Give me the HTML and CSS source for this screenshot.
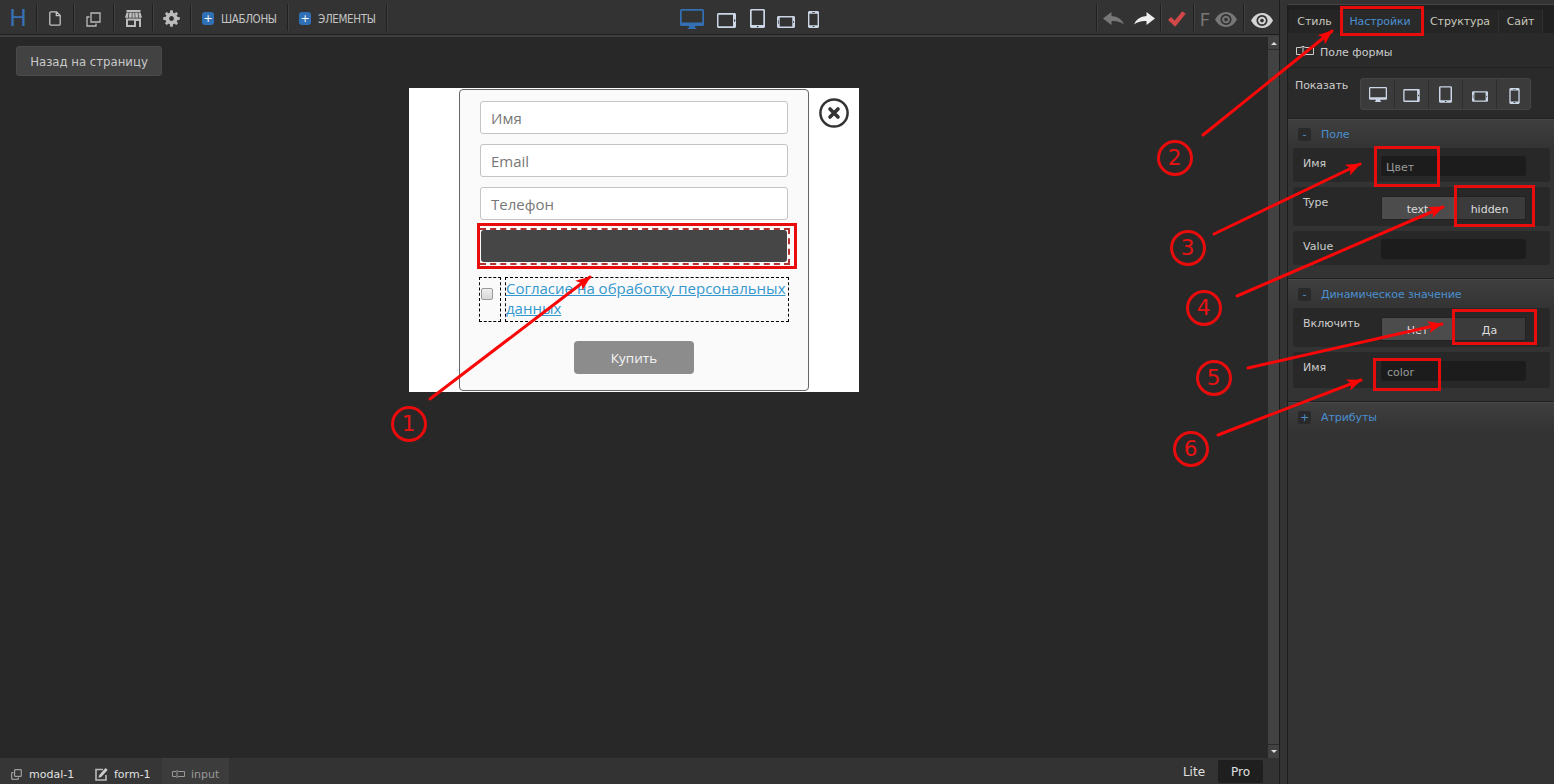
FILE: index.html
```
<!DOCTYPE html>
<html lang="ru">
<head>
<meta charset="utf-8">
<title>Редактор</title>
<link rel="stylesheet" href="styles.css">
</head>
<body>
<svg class="defs" width="0" height="0">
  <symbol id="desktop" viewBox="0 0 24 20"><path fill="currentColor" fill-rule="evenodd" d="M1.500 0h21Q24 0 24 1.500v14Q24 17 22.500 17H15v1.500l1.500 1v.5H7.500v-.5l1.500-1V17H1.500Q0 17 0 15.500v-14Q0 0 1.500 0ZM1.700 1.700v11.800h20.600V1.700Z"/></symbol>
  <symbol id="tablet-l" viewBox="0 0 19 15"><path fill="currentColor" fill-rule="evenodd" d="M1 0h17l1 1v13l-1 1H1l-1-1V1ZM1.500 1.700v11.600H16V1.700ZM17 6.500v2h1.300v-2Z"/></symbol>
  <symbol id="tablet-p" viewBox="0 0 15 19"><path fill="currentColor" fill-rule="evenodd" d="M1 0h13l1 1v17l-1 1H1l-1-1V1ZM1.700 1.500V16h11.600V1.500ZM6.800 17v1.200h1.600V17Z"/></symbol>
  <symbol id="phone-l" viewBox="0 0 18 12"><path fill="currentColor" fill-rule="evenodd" d="M1 0h16l1 1v10l-1 1H1l-1-1V1ZM2.700 1.500v9h12.600v-9ZM16 5.200v1.600h1V5.200ZM1 4v4h.600V4Z"/></symbol>
  <symbol id="phone-p" viewBox="0 0 11 17"><path fill="currentColor" fill-rule="evenodd" d="M1 0h9l1 1v15l-1 1H1l-1-1V1ZM1.400 2.700v11.600h8.200V2.700ZM4.700 15v1h1.600v-1ZM4 1v.7h3V1Z"/></symbol>
  <symbol id="copies" viewBox="0 0 15 15"><path fill="none" stroke="currentColor" stroke-width="1.300" d="M5 1h9v9H5ZM3.500 5H1v9h9v-2.500"/></symbol>
  <symbol id="field" viewBox="0 0 18 10"><path fill="none" stroke="currentColor" d="M5.500 1.500H.5v7h5M8.500 1.500h9v7h-9M7 .5v9M5.500.5h3M5.500 9.500h3"/></symbol>
  <symbol id="eye" viewBox="0 0 22 15"><path fill="currentColor" fill-rule="evenodd" d="M0 7.500Q4 0 11 0t11 7.500Q18 15 11 15T0 7.500ZM11 2a5.500 5.500 0 1 0 .01 0ZM11 3.700a3.800 3.800 0 1 1-.01 0ZM11 5.700a1.800 1.800 0 1 0 .01 0Z"/></symbol>
  <symbol id="arrow" viewBox="0 0 21 14"><path fill="currentColor" d="M12.500 0 21 6.500 12.500 13V9Q5 8.500 0 12.500 3 4.500 12.500 4Z"/></symbol>
</svg>

<div class="app">
  <main class="editor">
    <header class="topbar">
      <div class="cell c-logo">H</div>
      <div class="cell c-file"><svg width="12" height="15" viewBox="0 0 12 15"><path fill="none" stroke="#c4c4c4" stroke-width="1.300" d="M.8 2Q.8.8 2 .8h5.500L11.200 4.500V13q0 1.200-1.200 1.200H2Q.8 14.200.8 13ZM7.300 1v3.700h3.900"/></svg></div>
      <div class="cell c-copy"><svg width="15" height="15"><use href="#copies"/></svg></div>
      <div class="cell c-shop"><svg width="17" height="17" viewBox="0 0 17 17"><path fill="#bcbcbc" fill-rule="evenodd" d="M1.500 0h14v2h-14ZM1.500 2.600h2.200L3 7.800H0ZM4.400 2.600h2.500l-.2 5.200H3.700ZM7.500 2.600h2l.3 5.200h-2.500ZM10.100 2.600h2.500l.7 5.200h-2.900ZM13.300 2.600h2.200L17 7.800h-3ZM1 8.500h15V17h-2v-6h-3v6H1ZM3 10.500v4.500h6v-4.500Z"/></svg></div>
      <div class="cell c-gear"><svg width="17" height="17" viewBox="-8.500 -8.500 17 17"><g fill="#bcbcbc"><circle r="4.200" fill="none" stroke="#bcbcbc" stroke-width="3.600"/><path d="M-1.700-5.500-1.200-8.300H1.200L1.700-5.500ZM-1.700 5.500-1.200 8.300H1.200L1.700 5.500ZM-5.500-1.700-8.300-1.200V1.200L-5.500 1.700ZM5.500-1.700 8.300-1.200V1.200L5.500 1.700Z"/><path transform="rotate(45)" d="M-1.700-5.500-1.200-8H1.200L1.700-5.500ZM-1.700 5.500-1.200 8H1.200L1.700 5.500ZM-5.500-1.700-8-1.200V1.200L-5.500 1.700ZM5.500-1.700 8-1.200V1.200L5.500 1.700Z"/></g></svg></div>
      <div class="cell c-tpl"><span class="plus">+</span><span class="caps">ШАБЛОНЫ</span></div>
      <div class="cell c-elm"><span class="plus">+</span><span class="caps">ЭЛЕМЕНТЫ</span></div>
      <div class="devices">
        <svg class="active" width="24" height="20"><use href="#desktop"/></svg>
        <svg width="19" height="15"><use href="#tablet-l"/></svg>
        <svg width="15" height="19"><use href="#tablet-p"/></svg>
        <svg width="18" height="12"><use href="#phone-l"/></svg>
        <svg width="11" height="17"><use href="#phone-p"/></svg>
      </div>
      <div class="cell c-gap"></div>
      <div class="cell c-undo"><svg class="undo" width="21" height="14"><use href="#arrow"/></svg><svg class="redo" width="21" height="14"><use href="#arrow"/></svg></div>
      <div class="cell c-check"><svg width="18" height="16" viewBox="0 0 18 16"><path fill="none" stroke="#d04848" stroke-width="4.300" d="M1.500 7.500 7 12.700 16 1.500"/></svg></div>
      <div class="cell c-feye"><span>F</span><svg width="22" height="15"><use href="#eye"/></svg></div>
      <div class="c-eye"><svg width="22" height="15"><use href="#eye"/></svg></div>
    </header>

    <div class="workspace">
      <div class="stage">
        <a class="back">Назад на страницу</a>
        <div class="modal">
          <form class="form">
            <div class="input">Имя</div>
            <div class="input">Email</div>
            <div class="input">Телефон</div>
            <div class="hidden-box"><div class="hidden-input"></div></div>
            <div class="consent">
              <div class="check"><i></i></div>
              <div class="link"><a>Согласие на обработку персональных данных</a></div>
            </div>
            <div class="buy">Купить</div>
          </form>
          <svg class="close" width="30" height="30" viewBox="0 0 30 30"><circle cx="15" cy="15" r="13.600" fill="#fff" stroke="#333" stroke-width="2.500"/><path stroke="#333" stroke-width="3.600" stroke-linecap="round" d="M11 11l8 8M19 11l-8 8"/></svg>
        </div>
      </div>
      <div class="scroll"><b><i class="up"></i></b><b><i class="down"></i></b></div>
    </div>

    <footer class="bottombar">
      <div class="crumb c1"><svg width="11" height="11"><use href="#copies"/></svg>modal-1</div>
      <div class="crumb c2"><svg width="13" height="13" viewBox="0 0 13 13"><path fill="none" stroke="#bbb" stroke-width="1.600" d="M8 1.500H1v10.500h10V7"/><path fill="#ccc" d="M3.500 9.800 4.300 7 10.500 0 12.700 2 6.200 9Z"/></svg>form-1</div>
      <div class="crumb c3"><svg width="13" height="8" viewBox="0 0 13 8"><path fill="none" stroke="currentColor" d="M4 1.500H.5v5H4M6 1.500h6.500v5H6M5 0v8"/></svg>input</div>
      <div class="modes"><span>Lite</span><span class="on">Pro</span></div>
    </footer>
  </main>

  <aside class="panel">
    <nav class="tabs"><span class="t1">Стиль</span><span class="t2">Настройки</span><span class="t3">Структура</span><span class="t4">Сайт</span></nav>
    <div class="element"><svg width="18" height="10"><use href="#field"/></svg>Поле формы</div>
    <div class="show">
      <span>Показать</span>
      <div class="group">
        <i><svg width="18" height="15"><use href="#desktop"/></svg></i>
        <i><svg width="17" height="13"><use href="#tablet-l"/></svg></i>
        <i><svg width="13" height="17"><use href="#tablet-p"/></svg></i>
        <i><svg width="16" height="11"><use href="#phone-l"/></svg></i>
        <i><svg width="11" height="16"><use href="#phone-p"/></svg></i>
      </div>
    </div>
    <section class="block s1">
      <h3><b>-</b>Поле</h3>
      <div class="row r34"><label>Имя</label><div class="value">Цвет</div></div>
      <div class="row r39"><label>Type</label><div class="toggle"><span class="on">text</span><span>hidden</span></div></div>
      <div class="row r34"><label>Value</label><div class="value"></div></div>
    </section>
    <section class="block s2">
      <h3><b>-</b>Динамическое значение</h3>
      <div class="row r39"><label>Включить</label><div class="toggle"><span class="on">Нет</span><span>Да</span></div></div>
      <div class="row r36"><label>Имя</label><div class="value">color</div></div>
    </section>
    <section class="block s3"><h3><b>+</b>Атрибуты</h3></section>
  </aside>
</div>

<svg class="notes" width="1554" height="784" viewBox="0 0 1554 784">
  <defs><marker id="tip" markerUnits="userSpaceOnUse" markerWidth="16" markerHeight="12" refX="14" refY="6" orient="auto"><path fill="#fb0505" d="M0 0 15 6 0 12 3.500 6Z"/></marker></defs>
  <g class="frames">
    <rect x="478.500" y="224.500" width="317" height="43"/>
    <rect x="1341.500" y="7.500" width="81" height="27"/>
    <rect x="1375.500" y="147.500" width="63" height="38"/>
    <rect x="1455.500" y="186.500" width="78" height="39"/>
    <rect x="1453.500" y="310.500" width="82" height="33"/>
    <rect x="1374.500" y="359.500" width="65" height="30"/>
  </g>
  <g class="arrows">
    <path d="M430 399 590 277"/><path d="M1203 135 1332 31"/><path d="M1214 234 1360 164"/>
    <path d="M1237 296 1443 207"/><path d="M1248 368 1442 324"/><path d="M1218 435 1361 380"/>
  </g>
  <g class="rings">
    <circle cx="409" cy="424" r="16.500"/><circle cx="1175" cy="158" r="16.500"/><circle cx="1188" cy="248" r="16.500"/>
    <circle cx="1204" cy="308" r="16.500"/><circle cx="1214" cy="378" r="16.500"/><circle cx="1191" cy="449" r="16.500"/>
  </g>
  <g class="nums">
    <text x="408.500" y="431">1</text><text x="1174.500" y="165">2</text><text x="1187.500" y="255">3</text>
    <text x="1203.500" y="315">4</text><text x="1213.500" y="385">5</text><text x="1190.500" y="456">6</text>
  </g>
</svg>
</body>
</html>
```

FILE: styles.css
```
* { box-sizing: border-box; }
body { margin: 0; background: #333; font-family: "DejaVu Sans", sans-serif; font-size: 11px; color: #ccc; overflow: hidden; }
svg { display: block; flex: none; }
.defs { position: absolute; }
i, b { font-style: normal; font-weight: normal; }
.app { display: flex; width: 1554px; height: 784px; }

.editor { width: 1280px; display: flex; flex-direction: column; border-right: 1px solid #1c1c1c; }
.topbar { height: 37px; flex: none; display: flex; align-items: flex-start; padding-top: 4px; background: linear-gradient(#333 34px, #1e1e1e 34px, #1e1e1e 35px, #404040 35px); }
.cell { height: 27px; border-right: 1px solid #202020; box-shadow: 1px 0 #404040; display: flex; align-items: center; justify-content: center; flex: none; }
.c-logo { width: 37px; font: 24px/26px Roboto, sans-serif; color: #3771b5; }
.c-file { width: 37px; padding-top: 2px; }
.c-copy { width: 40px; padding-top: 3px; color: #bbb; }
.c-shop { width: 39px; padding-top: 2px; }
.c-gear { width: 38px; padding-top: 2px; }
.c-tpl { width: 97px; }
.c-elm { width: 99px; }
.c-tpl, .c-elm { justify-content: flex-start; padding: 2px 0 0 11px; gap: 7px; }
.plus { width: 12px; height: 13px; border-radius: 3px; background: #3070b4; color: #fff; font-size: 11px; line-height: 13px; text-align: center; }
.caps { font-family: "DejaVu Sans Condensed", "DejaVu Sans", sans-serif; font-size: 11.500px; letter-spacing: -.35px; color: #c4c4c4; white-space: nowrap; }
.devices { display: flex; align-items: flex-end; height: 24px; margin-left: 293px; color: #cbd6e6; width: 140px; flex: none; }
.devices .active { color: #3270b3; margin: 0 13px -1px 0; }
.devices svg:nth-child(2) { margin-right: 14px; }
.devices svg:nth-child(3) { margin-right: 12px; }
.devices svg:nth-child(4) { margin-right: 13px; }
.c-gap { flex: 1; }
.c-undo { width: 64px; gap: 10px; padding-top: 3px; }
.undo { color: #777; transform: scaleX(-1); }
.redo { color: #eee; }
.c-check { width: 33px; padding-top: 2px; }
.c-feye { width: 50px; gap: 5px; padding-top: 4px; color: #777; font: 18px/22px Roboto, sans-serif; }
.c-eye { width: 35px; color: #d4d4d4; padding: 9px 0 0 7px; }

.workspace { height: 721px; display: flex; background: #282828; }
.stage { flex: 1; padding: 9px 0 0 16px; }
.back { display: block; width: 146px; height: 30px; background: #424242; border: 1px solid #4a4a4a; border-radius: 3px; font: 13px/29px "DejaVu Sans Condensed", "DejaVu Sans", sans-serif; text-align: center; color: #c8c8c8; }
.modal { width: 450px; height: 304px; margin: 12px 0 0 393px; background: #fff; padding: 1px 10px 1px 50px; display: flex; justify-content: space-between; align-items: flex-start; }
.form { width: 350px; height: 302px; border: 1px solid #666; border-radius: 4px; background: #fafafa; padding: 11px 19px 0; font-family: "Open Sans", "Noto Sans", sans-serif; display: flex; flex-direction: column; }
.input { height: 33px; margin: 0 1px 10px; padding-left: 10px; background: #fff; border: 1px solid #c4c4c4; border-radius: 3px; font-size: 15px; line-height: 32px; color: #777; }
.hidden-box { height: 37px; width: 310px; margin: -2px 0 12px 1px; border: 2px dashed #b53030; border-left: 0; }
.hidden-input { height: 32px; width: 306px; margin-left: 1px; border-radius: 3px; background: #464646; }
.consent { display: flex; gap: 4px; height: 45px; }
.check { width: 22px; border: 1px dashed #000; padding: 10px 0 0 1px; }
.check i { display: block; width: 12px; height: 12px; border: 1px solid #999; border-radius: 2px; background: linear-gradient(#eee, #d8d8d8); }
.link { flex: none; width: 284px; border: 1px dashed #000; padding: 0; }
.link a { display: block; font-size: 15px; line-height: 20px; color: #3498d0; text-decoration: underline; }
.buy { width: 120px; height: 33px; margin: 19px auto 0 95px; background: #8c8c8c; border-radius: 4px; color: #f4f4f4; font-size: 13.500px; line-height: 34px; text-align: center; }
.close { margin-top: 9px; }
.scroll { width: 11px; background: #424242; display: flex; flex-direction: column; justify-content: space-between; }
.scroll b { height: 13px; border-bottom: 1px solid #2a2a2a; display: flex; align-items: center; justify-content: center; }
.scroll b:last-child { height: 14px; border-top: 1px solid #2a2a2a; border-bottom: 0; }
.up { border: 3px solid transparent; border-bottom-color: #ddd; border-top: 0; }
.down { border: 3px solid transparent; border-top-color: #ddd; border-bottom: 0; }

.bottombar { height: 26px; display: flex; background: #333; padding-top: 0; }
.crumb { display: flex; align-items: center; padding-top: 6px; background: #363636; color: #e0e0e0; font-size: 11px; }
.crumb svg { color: #bbb; }
.c1 { width: 86px; padding-left: 11px; gap: 7px; }
.c2 { width: 76px; padding-left: 9px; gap: 6px; }
.c3 { width: 67px; padding-left: 10px; gap: 6px; background: #3c3c3c; color: #999; }
.c3 svg { color: #999; }
.modes { margin-left: auto; display: flex; padding: 2px 16px 1px 0; font-size: 12px; line-height: 25px; color: #e0e0e0; }
.modes span { width: 48px; text-align: center; }
.modes .on { width: 45px; background: #1f1f1f; border-radius: 2px; }

.panel { width: 267px; margin: 4px 0 0 7px; border-left: 1px solid #1c1c1c; border-top: 1px solid #444; background: #333; }
.tabs { height: 28px; padding: 5px 0 0 1px; background: #202020; display: flex; line-height: 23px; }
.tabs span { text-align: center; background: #252525; border-right: 1px solid #303030; white-space: nowrap; color: #c8c8bc; letter-spacing: -.1px; }
.t1 { width: 52px; }
.t2 { width: 82px; padding-right: 3px; }
.t3 { width: 76px; padding-right: 1px; }
.t4 { width: 44px; }
.tabs .t2 { background: #2a2a2a; color: #4a90d0; }
.element { height: 35px; background: #2a2a2a; display: flex; align-items: center; gap: 6px; padding: 4px 0 0 8px; box-shadow: inset 0 -1px #222; color: #ccc; }
.element svg { margin-top: -3px; }
.show { height: 50px; background: #2a2a2a; display: flex; padding: 10px 0 0 7px; }
.show > span { width: 65px; line-height: 15px; letter-spacing: -.1px; }
.group { display: flex; height: 32px; width: 171px; background: #3b3b3b; border: 1px solid #454545; border-radius: 3px; color: #cbd6e6; }
.group i { width: 34px; flex: none; border-right: 1px solid #2e2e2e; display: flex; align-items: flex-end; justify-content: center; padding-bottom: 7px; }
.group i:nth-child(3) { padding-bottom: 6px; }
.group i:last-child { border: 0; padding-bottom: 5px; }
.block { border-top: 1px solid #202020; padding: 0 4px 0 5px; background: linear-gradient(#484848 0 1px, #3f3f3f 1px, #333 30px); display: flex; flex-direction: column; gap: 5px; }
.s1 { height: 160px; }
.s2 { height: 123px; }
.s3 { height: 40px; }
.block h3 { margin: 0 0 -5px; height: 29px; font-size: 11px; font-weight: normal; letter-spacing: -.08px; color: #4a90d0; display: flex; align-items: center; gap: 10px; padding: 1px 0 0 5px; }
.block h3 b { width: 13px; height: 13px; background: #292929; border-radius: 2px; text-align: center; line-height: 13px; }
.row { display: flex; flex: none; background: #282828; border-radius: 3px; padding: 8px 0 0 10px; }
.r34 { height: 34px; }
.r39 { height: 39px; }
.r36 { height: 36px; }
.row label { width: 78px; line-height: 15px; }
.value { width: 145px; height: 20px; background: #1c1c1c; border-radius: 3px; padding-left: 5px; line-height: 23px; color: #999; }
.r36 .value { margin-top: 1px; padding-left: 6px; }
.toggle { display: flex; height: 24px; width: 145px; border: 1px solid #222; margin-top: 1px; line-height: 26px; color: #ddd; }
.toggle span { flex: 1; background: #3b3b3b; text-align: center; }
.toggle .on { background: #4c4c4c; border-right: 1px solid #555; }

.notes { position: absolute; left: 0; top: 0; pointer-events: none; }
.frames rect, .rings circle { fill: none; stroke: #e80c0c; stroke-width: 3; }
.arrows path { fill: none; stroke: #f80808; stroke-width: 3; stroke-linecap: round; marker-end: url(#tip); }
.nums text { font: 21.500px "DejaVu Sans", sans-serif; fill: #e81212; text-anchor: middle; }
```
